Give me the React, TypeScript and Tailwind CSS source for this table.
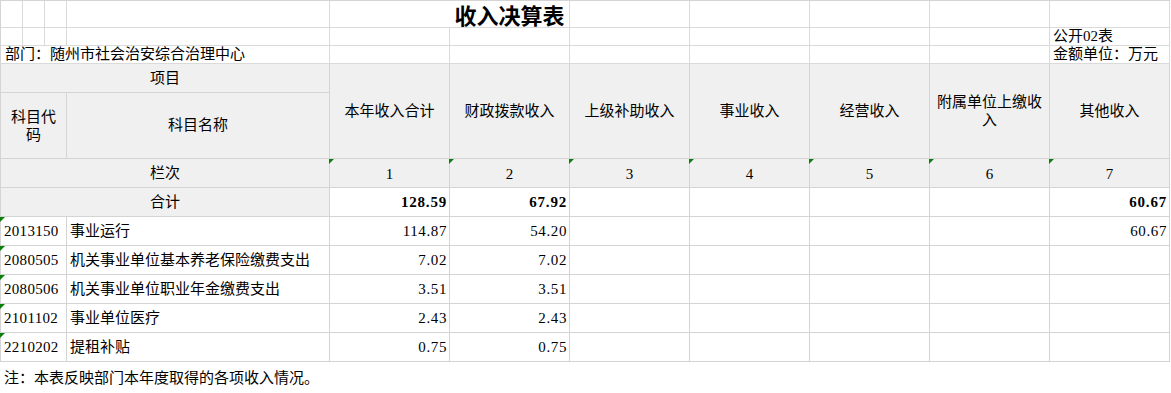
import clsx from "clsx";
import type { ReactNode } from "react";

const heads = ["本年收入合计", "财政拨款收入", "上级补助收入", "事业收入", "经营收入", "附属单位上缴收入", "其他收入"];

const totals = ["128.59", "67.92", "", "", "", "", "60.67"];

const rows = [
  { code: "2013150", name: "事业运行", vals: ["114.87", "54.20", "", "", "", "", "60.67"] },
  { code: "2080505", name: "机关事业单位基本养老保险缴费支出", vals: ["7.02", "7.02", "", "", "", "", ""] },
  { code: "2080506", name: "机关事业单位职业年金缴费支出", vals: ["3.51", "3.51", "", "", "", "", ""] },
  { code: "2101102", name: "事业单位医疗", vals: ["2.43", "2.43", "", "", "", "", ""] },
  { code: "2210202", name: "提租补贴", vals: ["0.75", "0.75", "", "", "", "", ""] },
];

const Cell = ({
  className,
  children,
  tri = false,
  top = false,
}: {
  className?: string;
  children?: ReactNode;
  tri?: boolean;
  top?: boolean;
}) => (
  <div
    className={clsx(
      "relative flex items-center border-r border-b",
      top ? "border-[#dadada]" : "border-[#d4d4d4]",
      className
    )}
  >
    {tri && (
      <span className="absolute -left-px top-0 h-[5px] w-[5px] bg-[#0a800a] [clip-path:polygon(0_0,100%_0,0_100%)]" />
    )}
    {children}
  </div>
);

const App = () => {
  return (
    <div className="w-[1171px] h-[393px] bg-white text-black text-[15px] font-['Liberation_Serif','Noto_Sans_CJK_SC',serif]">
      <div className="grid w-[1170px] grid-cols-[22px_22px_22px_263px_repeat(7,120px)] grid-rows-[27px_18px_18px_29px_66px_repeat(7,29px)] border-l border-t border-[#d4d4d4]">
        {/* title row */}
        <Cell top />
        <Cell top />
        <Cell top />
        <Cell top />
        <Cell top className="col-span-2">
          <div className="w-[120px]" />
          <div className="flex-1 text-center text-[22px] font-bold leading-none font-['Noto_Sans_CJK_SC',sans-serif]">
            收入决算表
          </div>
        </Cell>
        <Cell top />
        <Cell top />
        <Cell top />
        <Cell top />
        <Cell top />

        {/* form number row */}
        <Cell top />
        <Cell top />
        <Cell top />
        <Cell top />
        <Cell top />
        <Cell top />
        <Cell top />
        <Cell top />
        <Cell top />
        <Cell top />
        <Cell top className="items-end pl-[3px] leading-[17px] whitespace-nowrap">
          公开02表
        </Cell>

        {/* department row */}
        <Cell top className="col-span-4 items-end pl-[4px] leading-[17px] whitespace-nowrap">
          部门：随州市社会治安综合治理中心
        </Cell>
        <Cell top />
        <Cell top />
        <Cell top />
        <Cell top />
        <Cell top />
        <Cell top />
        <Cell top className="items-end pl-[3px] leading-[17px] whitespace-nowrap">
          金额单位：万元
        </Cell>

        {/* header */}
        <Cell className="col-span-4 justify-center bg-[#f0f0f0]">项目</Cell>
        {heads.map((h) => (
          <Cell key={h} className="row-span-2 justify-center bg-[#f0f0f0] px-[6px] text-center leading-[18px]">
            {h}
          </Cell>
        ))}
        <Cell className="col-span-3 justify-center bg-[#f0f0f0] text-center leading-[18px]">
          <span className="w-[46px]">科目代码</span>
        </Cell>
        <Cell className="justify-center bg-[#f0f0f0]">科目名称</Cell>

        {/* column index */}
        <Cell className="col-span-4 justify-center bg-[#f0f0f0]">栏次</Cell>
        {heads.map((h, i) => (
          <Cell key={h} tri className="justify-center bg-[#f0f0f0] pt-[3px]">
            {i + 1}
          </Cell>
        ))}

        {/* totals */}
        <Cell className="col-span-4 justify-center bg-[#f0f0f0]">合计</Cell>
        {totals.map((v, i) => (
          <Cell key={i} className="justify-end pr-[2px] font-bold tracking-[0.8px]">
            {v}
          </Cell>
        ))}

        {/* data rows */}
        {rows.map((r) => (
          <div key={r.code} className="contents">
            <Cell tri className="col-span-3 pl-[3px] whitespace-nowrap tracking-[0.3px]">
              {r.code}
            </Cell>
            <Cell className="pl-[3px] whitespace-nowrap">{r.name}</Cell>
            {r.vals.map((v, i) => (
              <Cell key={i} className="justify-end pr-[2px] tracking-[0.6px]">
                {v}
              </Cell>
            ))}
          </div>
        ))}
      </div>

      <div className="flex h-[32px] items-center pl-[4px]">注：本表反映部门本年度取得的各项收入情况。</div>
    </div>
  );
};

export default App;
